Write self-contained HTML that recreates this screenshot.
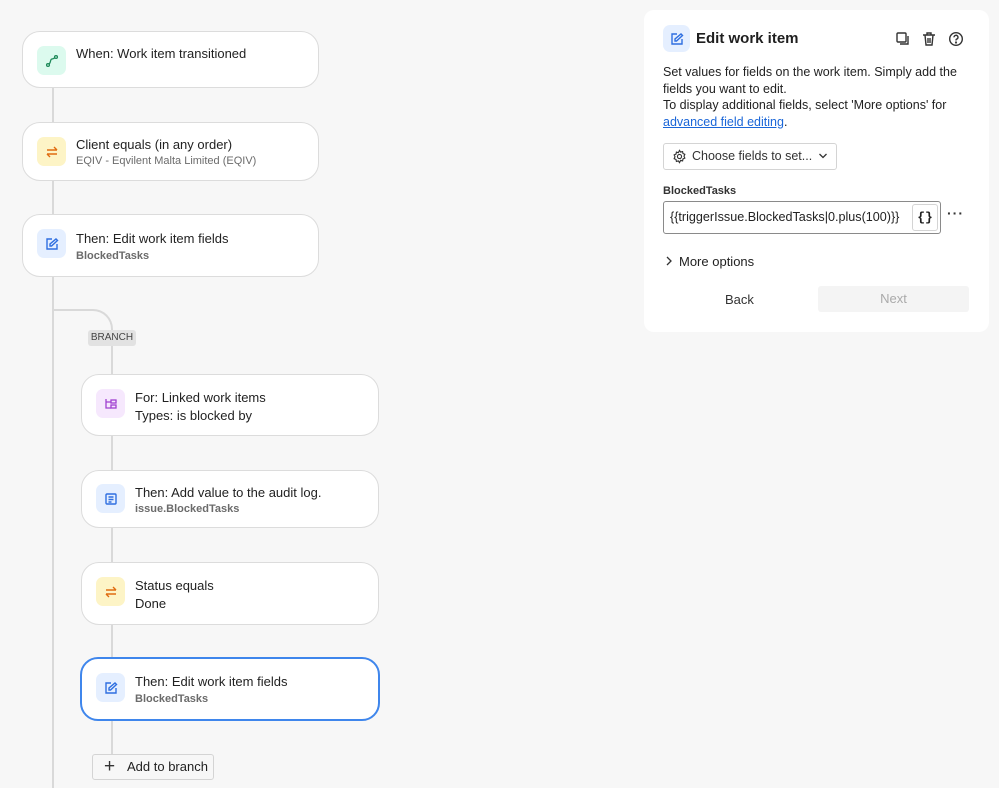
<!DOCTYPE html>
<html><head><meta charset="utf-8"><style>
*{box-sizing:border-box;margin:0;padding:0}
body{width:999px;height:787px;background:#f7f7f7;font-family:"Liberation Sans",sans-serif;color:#1f1f1f;position:relative;overflow:hidden}
.a{position:absolute}
.card{position:absolute;background:#fff;border:1px solid #dcdcdc;border-radius:18px}
.ic{position:absolute;width:29px;height:29px;border-radius:7px;display:flex;align-items:center;justify-content:center}
.t{position:absolute;font-size:13px;color:#222}
.s{position:absolute;font-size:11px;color:#6b6b6b}
.b{font-weight:bold}
.line{position:absolute;background:#d9d9d9;width:2px}
</style></head><body>
<div class="line" style="left:52px;top:88px;height:700px"></div>
<div class="a" style="left:53px;top:309px;width:60px;height:40px;border-top:2px solid #d9d9d9;border-right:2px solid #d9d9d9;border-top-right-radius:20px"></div>
<div class="line" style="left:111px;top:346px;height:420px"></div>
<div class="a" style="left:88px;top:330px;width:48px;height:16px;background:#e2e2e2;border-radius:3px;font-size:10px;color:#444;text-align:center;line-height:16px">BRANCH</div>

<div class="card" style="left:22px;top:31px;width:297px;height:57px">
<div class="ic" style="left:14px;top:14px;background:#dcfaee"><svg width="14" height="14" viewBox="0 0 14 14" fill="none" stroke="#1f8a5a" stroke-width="1.3"><circle cx="3" cy="11" r="1.4"/><circle cx="11" cy="3" r="1.4"/><path d="M4 10 C6 9 5 5 7 5 C8 5 9 4 10 4"/></svg></div>
<div class="t" style="left:53px;top:14px">When: Work item transitioned</div></div>

<div class="card" style="left:22px;top:122px;width:297px;height:59px">
<div class="ic" style="left:14px;top:14px;background:#fdf4c6"><svg width="14" height="14" viewBox="0 0 14 14" fill="none" stroke="#e06c10" stroke-width="1.4"><path d="M2 5h10M9 2l3 3M12 9H2M5 12l-3-3"/></svg></div>
<div class="t" style="left:53px;top:14px">Client equals (in any order)</div>
<div class="s" style="left:53px;top:32px">EQIV - Eqvilent Malta Limited (EQIV)</div></div>

<div class="card" style="left:22px;top:214px;width:297px;height:63px">
<div class="ic" style="left:14px;top:14px;background:#e5efff"><svg width="14" height="14" viewBox="0 0 14 14" fill="none" stroke="#2f6fe0" stroke-width="1.4"><path d="M7 2H2v10h10V7M5 9V7l6-5 1.5 1.5-6 5.5z"/></svg></div>
<div class="t" style="left:53px;top:16px">Then: Edit work item fields</div>
<div class="s b" style="left:53px;top:35px">BlockedTasks</div></div>

<div class="card" style="left:81px;top:374px;width:298px;height:62px">
<div class="ic" style="left:14px;top:14px;background:#f6e8fd"><svg width="14" height="14" viewBox="0 0 14 14" fill="none" stroke="#a040d0" stroke-width="1.3"><path d="M2 2v9h5M2 5h5"/><rect x="7" y="3" width="5" height="3"/><rect x="7" y="8" width="5" height="3"/></svg></div>
<div class="t" style="left:53px;top:15px">For: Linked work items</div>
<div class="t" style="left:53px;top:33px">Types: is blocked by</div></div>

<div class="card" style="left:81px;top:470px;width:298px;height:58px">
<div class="ic" style="left:14px;top:13px;background:#e5efff"><svg width="14" height="14" viewBox="0 0 14 14" fill="none" stroke="#2f6fe0" stroke-width="1.4"><rect x="2" y="2" width="10" height="10" rx="1"/><path d="M4.5 5h5M4.5 7.5h5M4.5 10h3"/></svg></div>
<div class="t" style="left:53px;top:14px">Then: Add value to the audit log.</div>
<div class="s b" style="left:53px;top:32px">issue.BlockedTasks</div></div>

<div class="card" style="left:81px;top:562px;width:298px;height:63px">
<div class="ic" style="left:14px;top:14px;background:#fdf4c6"><svg width="14" height="14" viewBox="0 0 14 14" fill="none" stroke="#e06c10" stroke-width="1.4"><path d="M2 5h10M9 2l3 3M12 9H2M5 12l-3-3"/></svg></div>
<div class="t" style="left:53px;top:15px">Status equals</div>
<div class="t" style="left:53px;top:33px">Done</div></div>

<div class="card" style="left:80px;top:657px;width:300px;height:64px;border:2px solid #3f86ec">
<div class="ic" style="left:14px;top:14px;background:#e5efff"><svg width="14" height="14" viewBox="0 0 14 14" fill="none" stroke="#2f6fe0" stroke-width="1.4"><path d="M7 2H2v10h10V7M5 9V7l6-5 1.5 1.5-6 5.5z"/></svg></div>
<div class="t" style="left:53px;top:15px">Then: Edit work item fields</div>
<div class="s b" style="left:53px;top:34px">BlockedTasks</div></div>

<div class="a" style="left:92px;top:754px;width:122px;height:26px;background:#f7f7f7;border:1px solid #d4d4d4;border-radius:3px;font-size:13px;line-height:24px;padding-left:34px">Add to branch</div>
<div class="a" style="left:104px;top:760px;font-size:19px;line-height:14px;color:#333;font-weight:300">+</div>

<div class="a" style="left:644px;top:10px;width:345px;height:322px;background:#fff;border-radius:10px"></div>
<div class="ic" style="left:663px;top:25px;width:27px;height:27px;background:#e5efff"><svg width="14" height="14" viewBox="0 0 14 14" fill="none" stroke="#2f6fe0" stroke-width="1.4"><path d="M7 2H2v10h10V7M5 9V7l6-5 1.5 1.5-6 5.5z"/></svg></div>
<div class="a b" style="left:696px;top:30px;font-size:15px">Edit work item</div>
<svg class="a" style="left:895px;top:31px" width="16" height="16" viewBox="0 0 16 16" fill="none" stroke="#333" stroke-width="1.4"><rect x="2" y="2" width="9" height="9" rx="1"/><path d="M13 5v8H5"/></svg>
<svg class="a" style="left:921px;top:31px" width="16" height="16" viewBox="0 0 16 16" fill="none" stroke="#333" stroke-width="1.4"><path d="M2 4h12M6 4V2h4v2M4 4l1 10h6l1-10M7 7v5M9 7v5"/></svg>
<svg class="a" style="left:948px;top:31px" width="16" height="16" viewBox="0 0 16 16" fill="none" stroke="#333" stroke-width="1.4"><circle cx="8" cy="8" r="6.3"/><path d="M6 6.3a2 2 0 1 1 2.5 1.9c-.5.2-.5.6-.5 1.3"/><circle cx="8" cy="11.5" r=".4" fill="#333"/></svg>
<div class="a" style="left:663px;top:64px;width:320px;font-size:12.5px;line-height:16.5px;color:#222">Set values for fields on the work item. Simply add the fields you want to edit.<br>To display additional fields, select 'More options' for <span style="color:#1a66d8;text-decoration:underline">advanced field editing</span>.</div>
<div class="a" style="left:663px;top:143px;width:174px;height:27px;border:1px solid #d4d4d4;border-radius:3px;font-size:12.5px;line-height:25px;padding-left:28px;color:#333">Choose fields to set...</div>
<svg class="a" style="left:672px;top:149px" width="15" height="15" viewBox="0 0 16 16" fill="none" stroke="#333" stroke-width="1.2"><circle cx="8" cy="8" r="2.2"/><path d="M8 1.5l1.2 1.8 2.1-.6.4 2.1 2 .9-.9 2 .9 2-2 .9-.4 2.1-2.1-.6L8 14.5l-1.2-1.8-2.1.6-.4-2.1-2-.9.9-2-.9-2 2-.9.4-2.1 2.1.6z"/></svg>
<svg class="a" style="left:818px;top:152px" width="10" height="8" viewBox="0 0 10 8" fill="none" stroke="#333" stroke-width="1.3"><path d="M1.5 2l3.5 3.5L8.5 2"/></svg>
<div class="a b" style="left:663px;top:185px;font-size:11px;color:#333">BlockedTasks</div>
<div class="a" style="left:663px;top:201px;width:278px;height:33px;border:1px solid #8a8a8a;border-radius:3px;font-size:12.6px;line-height:31px;padding-left:6px;color:#222">{{triggerIssue.BlockedTasks|0.plus(100)}}</div>
<div class="a b" style="left:912px;top:204px;width:26px;height:27px;border:1px solid #d4d4d4;border-radius:3px;background:#fff;font-size:13px;line-height:25px;text-align:center;font-family:'Liberation Mono',monospace">{}</div>
<div class="a b" style="left:947px;top:205px;font-size:14px;letter-spacing:1px;color:#333">···</div>
<svg class="a" style="left:665px;top:256px" width="8" height="10" viewBox="0 0 8 10" fill="none" stroke="#333" stroke-width="1.3"><path d="M2 1l4 4-4 4"/></svg>
<div class="a" style="left:679px;top:254px;font-size:13px;color:#222">More options</div>
<div class="a" style="left:725px;top:292px;font-size:13px;color:#333">Back</div>
<div class="a" style="left:818px;top:286px;width:151px;height:26px;background:#f4f4f4;border-radius:3px;font-size:13px;line-height:26px;text-align:center;color:#aaa">Next</div>
</body></html>
